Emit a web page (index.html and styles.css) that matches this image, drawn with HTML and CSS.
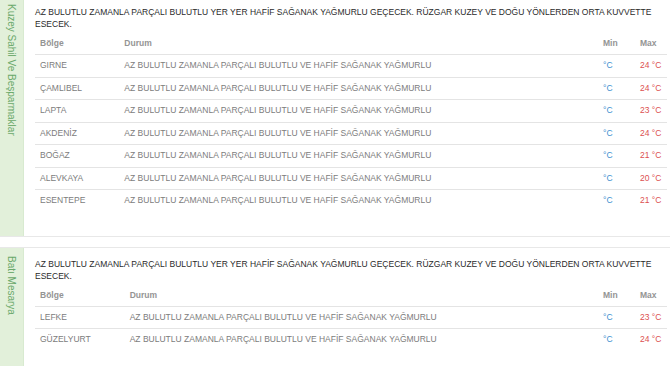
FILE: index.html
```html
<!DOCTYPE html>
<html lang="tr">
<head>
<meta charset="utf-8">
<title>Hava Durumu</title>
<link rel="stylesheet" href="styles.css">
</head>
<body>
<div class="page">
  <section class="region">
    <div class="side">Kuzey Sahil Ve Beşparmaklar</div>
    <div class="content">
      <p class="summary">AZ BULUTLU ZAMANLA PARÇALI BULUTLU YER YER HAFİF SAĞANAK YAĞMURLU GEÇECEK. RÜZGAR KUZEY VE DOĞU YÖNLERDEN ORTA KUVVETTE ESECEK.</p>
      <table class="forecast">
        <thead>
          <tr><th class="c-region">Bölge</th><th>Durum</th><th class="c-min">Min</th><th class="c-max">Max</th></tr>
        </thead>
        <tbody>
          <tr><td class="c-region">GIRNE</td><td>AZ BULUTLU ZAMANLA PARÇALI BULUTLU VE HAFİF SAĞANAK YAĞMURLU</td><td class="min">°C</td><td class="max">24 °C</td></tr>
          <tr><td class="c-region">ÇAMLIBEL</td><td>AZ BULUTLU ZAMANLA PARÇALI BULUTLU VE HAFİF SAĞANAK YAĞMURLU</td><td class="min">°C</td><td class="max">24 °C</td></tr>
          <tr><td class="c-region">LAPTA</td><td>AZ BULUTLU ZAMANLA PARÇALI BULUTLU VE HAFİF SAĞANAK YAĞMURLU</td><td class="min">°C</td><td class="max">23 °C</td></tr>
          <tr><td class="c-region">AKDENİZ</td><td>AZ BULUTLU ZAMANLA PARÇALI BULUTLU VE HAFİF SAĞANAK YAĞMURLU</td><td class="min">°C</td><td class="max">24 °C</td></tr>
          <tr><td class="c-region">BOĞAZ</td><td>AZ BULUTLU ZAMANLA PARÇALI BULUTLU VE HAFİF SAĞANAK YAĞMURLU</td><td class="min">°C</td><td class="max">21 °C</td></tr>
          <tr><td class="c-region">ALEVKAYA</td><td>AZ BULUTLU ZAMANLA PARÇALI BULUTLU VE HAFİF SAĞANAK YAĞMURLU</td><td class="min">°C</td><td class="max">20 °C</td></tr>
          <tr><td class="c-region">ESENTEPE</td><td>AZ BULUTLU ZAMANLA PARÇALI BULUTLU VE HAFİF SAĞANAK YAĞMURLU</td><td class="min">°C</td><td class="max">21 °C</td></tr>
        </tbody>
      </table>
    </div>
  </section>
  <section class="region">
    <div class="side">Batı Mesarya</div>
    <div class="content">
      <p class="summary">AZ BULUTLU ZAMANLA PARÇALI BULUTLU YER YER HAFİF SAĞANAK YAĞMURLU GEÇECEK. RÜZGAR KUZEY VE DOĞU YÖNLERDEN ORTA KUVVETTE ESECEK.</p>
      <table class="forecast">
        <thead>
          <tr><th class="c-region">Bölge</th><th>Durum</th><th class="c-min">Min</th><th class="c-max">Max</th></tr>
        </thead>
        <tbody>
          <tr><td class="c-region">LEFKE</td><td>AZ BULUTLU ZAMANLA PARÇALI BULUTLU VE HAFİF SAĞANAK YAĞMURLU</td><td class="min">°C</td><td class="max">23 °C</td></tr>
          <tr><td class="c-region">GÜZELYURT</td><td>AZ BULUTLU ZAMANLA PARÇALI BULUTLU VE HAFİF SAĞANAK YAĞMURLU</td><td class="min">°C</td><td class="max">24 °C</td></tr>
        </tbody>
      </table>
    </div>
  </section>
</div>
</body>
</html>
```
FILE: styles.css
```css
html, body {
  margin: 0;
  padding: 0;
  background: #ffffff;
}

body {
  font-family: "Liberation Sans", Arial, sans-serif;
  font-size: 8.5px;
  color: #333333;
  overflow: hidden;
}

.page {
  margin-top: -5px;
}

.region {
  display: flex;
  border-top: 1px solid #e8e8e8;
  border-bottom: 1px solid #e8e8e8;
  margin-bottom: 10px;
}

.side {
  flex: none;
  width: 24px;
  box-sizing: border-box;
  background: #e2f0da;
  border-right: 1px solid #d8ead0;
  color: #6aa86a;
  font-size: 10px;
  writing-mode: vertical-rl;
  line-height: 23px;
  padding-top: 8px;
  white-space: nowrap;
}

.content {
  flex: 1;
  min-width: 0;
  padding: 10px 3px 24px 11px;
}

.summary {
  margin: 0 0 2px 0;
  line-height: 12px;
  color: #2a2a2a;
}

.forecast {
  width: 100%;
  border-collapse: collapse;
  border-spacing: 0;
}

.forecast th {
  text-align: left;
  font-weight: bold;
  color: #949494;
  padding: 5px;
  line-height: 12px;
}

.forecast td {
  color: #7c7c7c;
  padding: 5px;
  line-height: 11.5px;
  border-top: 1px solid #e4e4e4;
  white-space: nowrap;
}

.forecast .c-region {
  width: 1%;
  white-space: nowrap;
  padding-right: 34px;
}

.forecast .c-min {
  width: 27px;
}

.forecast .c-max {
  width: 22px;
}

.forecast td.min {
  color: #3f8fd0;
}

.forecast td.max {
  color: #dc5050;
}
```
